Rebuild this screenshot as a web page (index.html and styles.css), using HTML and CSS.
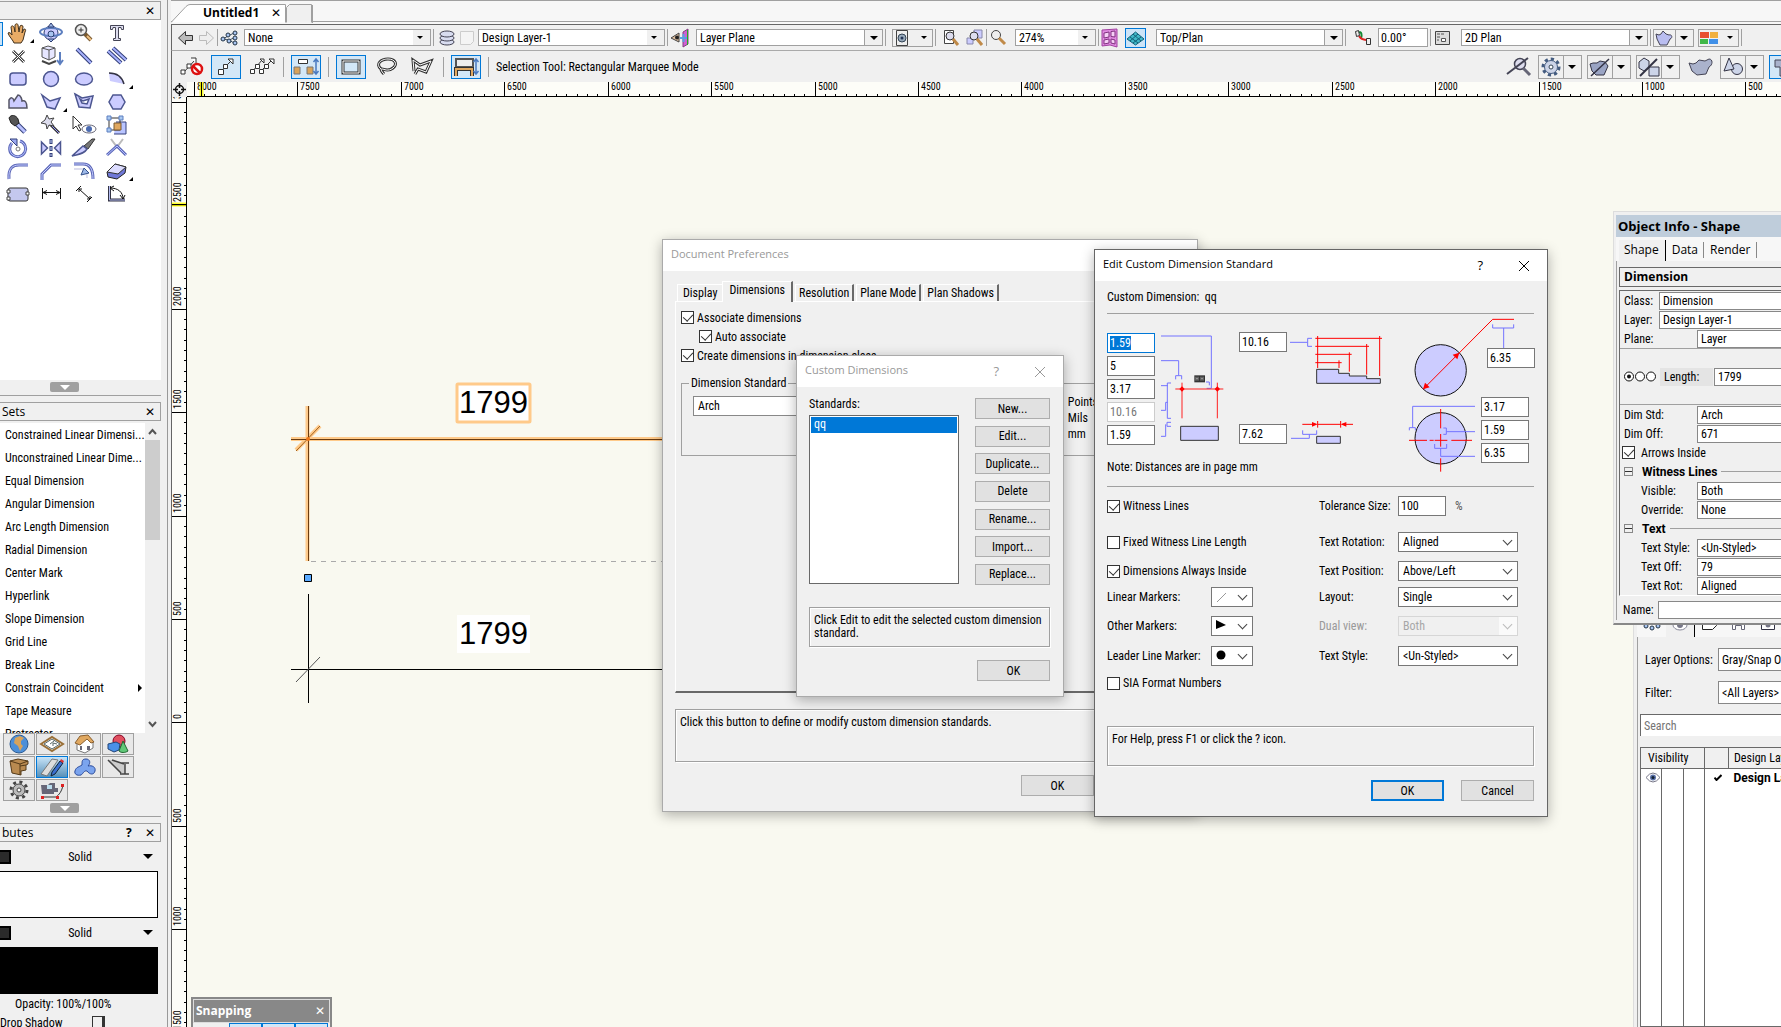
FILE: index.html
```html
<!DOCTYPE html>
<html lang="en">
<head>
  <meta charset="UTF-8">
  <meta name="viewport" content="width=device-width, initial-scale=1.0">
  <title>Untitled1</title>
  <link rel="stylesheet" href="styles.css">
</head>
<body>
  <div class="app">

    <!-- Left palettes -->
    <aside class="sidebar">
      <div class="pal-title"><span></span><button class="pal-close" aria-label="Close">✕</button></div>
      <div class="tools">
        <button class="tool more" aria-label="Pan"><svg width="24" height="22" viewBox="0 0 24 22"><path d="M7 19c-2-3-4-5-5-8 1-1 3 0 4 2L5 5c1-2 2-1 3 0l1 5V3c1-2 3-1 3 0l1 7 1-6c1-1 3-1 3 1l-1 6 2-4c2 0 2 1 1 3l-2 8-2 3H8z" fill="#e8ab66" stroke="#40301c"/></svg></button>
        <button class="tool" aria-label="Flyover"><svg width="26" height="22" viewBox="0 0 26 22"><circle cx="13" cy="11" r="7" fill="#ccf" stroke="#2d3c70"/><ellipse cx="13" cy="10" rx="11" ry="4" fill="none" stroke="#5d7fc0" stroke-width="2"/><path d="M13 1l3 4h-6zM13 20l3-3h-6z" fill="#9db8e8" stroke="#2d3c70"/><circle cx="13" cy="12" r="3" fill="#a8c4f0" stroke="#2d3c70"/></svg></button>
        <button class="tool" aria-label="Zoom"><svg width="24" height="22" viewBox="0 0 24 22"><circle cx="9" cy="8" r="5.500" fill="#eee" stroke="#555" stroke-width="1.500"/><path d="M6.500 8h5M9 5.500v5" stroke="#333"/><path d="M13 12l6 6" stroke="#7a5a30" stroke-width="4"/><path d="M15 14l4 4" stroke="#f0c080" stroke-width="2"/></svg></button>
        <button class="tool" aria-label="Text"><svg width="24" height="22" viewBox="0 0 24 22"><path d="M5.500 3.500h13v4h-2l-.5-2h-2.500v11h2v2h-7v-2h2v-11H8l-.5 2h-2z" fill="#dde" stroke="#445"/></svg></button>

        <button class="tool" aria-label="Locus"><svg width="24" height="22" viewBox="0 0 24 22"><path d="M7 6l11 11M18 6L7 17" stroke="#444" stroke-width="3"/><path d="M7 6l11 11M18 6L7 17" stroke="#fff"/></svg></button>
        <button class="tool" aria-label="Extrude"><svg width="26" height="22" viewBox="0 0 26 22"><path d="M4 3l6-2 7 2v9l-6 3-7-3z" fill="#e6e6ff" stroke="#555"/><path d="M4 3l7 2 6-2M11 5v10" stroke="#555" fill="none"/><path d="M4 16l7 3 7-3" fill="none" stroke="#444" stroke-width="2"/><path d="M22 7v11M19 15l3 4 3-4" stroke="#5d7fc0" stroke-width="2" fill="none"/></svg></button>
        <button class="tool" aria-label="Line"><svg width="24" height="22" viewBox="0 0 24 22"><path d="M5 4l14 14" stroke="#34407a" stroke-width="4"/><path d="M5 4l14 14" stroke="#a9b4ff" stroke-width="2"/></svg></button>
        <button class="tool" aria-label="Double line"><svg width="24" height="22" viewBox="0 0 24 22"><path d="M3 6l13 12M8 3l13 12" stroke="#34407a" stroke-width="4"/><path d="M3 6l13 12M8 3l13 12" stroke="#a9b4ff" stroke-width="2"/></svg></button>

        <button class="tool" aria-label="Rounded rectangle"><svg width="24" height="22" viewBox="0 0 24 22"><rect x="4" y="5" width="16" height="12" rx="3" class="shape"/></svg></button>
        <button class="tool" aria-label="Circle"><svg width="24" height="22" viewBox="0 0 24 22"><circle cx="12" cy="11" r="7.500" class="shape"/></svg></button>
        <button class="tool" aria-label="Oval"><svg width="24" height="22" viewBox="0 0 24 22"><ellipse cx="12" cy="11" rx="8.500" ry="6" class="shape"/></svg></button>
        <button class="tool more" aria-label="Arc"><svg width="24" height="22" viewBox="0 0 24 22"><path d="M4 5c8 0 14 4 15 11L5 13z" fill="#ccf"/><path d="M4 5c8 0 13 4 15 11" fill="none" stroke="#334" stroke-width="1.500"/></svg></button>

        <button class="tool" aria-label="Freehand"><svg width="24" height="22" viewBox="0 0 24 22"><path d="M3 17V9c2-3 4-3 5 1l4-6c3 0 4 5 4 6 3-1 5 1 5 7z" fill="#ccf" stroke="#556" stroke-width="1.500"/></svg></button>
        <button class="tool more" aria-label="Polyline"><svg width="24" height="22" viewBox="0 0 24 22"><path d="M3 4l8 6 10-3-5 11-8-2z" class="shape"/></svg></button>
        <button class="tool" aria-label="Polygon"><svg width="24" height="22" viewBox="0 0 24 22"><path d="M3 3l7 4 11-2-3 12-11-1zM8 8l2 4 5 1 2-5-6 2z" class="shape" fill-rule="evenodd"/></svg></button>
        <button class="tool" aria-label="Regular polygon"><svg width="24" height="22" viewBox="0 0 24 22"><path d="M8 4h8l4 7-4 7H8l-4-7z" class="shape"/></svg></button>

        <button class="tool" aria-label="Eyedropper"><svg width="24" height="22" viewBox="0 0 24 22"><path d="M10 9l9 9" stroke="#34407a" stroke-width="5"/><path d="M11 10l8 8" stroke="#b9c0ff" stroke-width="3"/><path d="M3 4c2-4 7-3 9 1l1 4-4 3-4-3z" fill="#555" stroke="#222"/></svg></button>
        <button class="tool" aria-label="Wand"><svg width="24" height="22" viewBox="0 0 24 22"><path d="M11 10l9 9" stroke="#333" stroke-width="3"/><path d="M12 11l8 8" stroke="#99f"/><path d="M8 1l2 4 5-1-3 4 3 4-5-1-2 4-1-5-5-1 4-3z" fill="#dde" stroke="#444"/></svg></button>
        <button class="tool" aria-label="Visibility"><svg width="26" height="22" viewBox="0 0 26 22"><path d="M2 2v13l3-3 3 5 2-1-3-5h4z" fill="#fff" stroke="#333"/><ellipse cx="18" cy="15" rx="7" ry="4" fill="#fff" stroke="#667"/><circle cx="18" cy="15" r="3" fill="#4a6ab0"/></svg></button>
        <button class="tool" aria-label="Select similar"><svg width="24" height="22" viewBox="0 0 24 22"><path d="M11 8h10v12H9" fill="#b9c4ff" stroke="#34407a"/><path d="M4 4h11v12H4z" fill="none" stroke="#333"/><path d="M9 9h7v7H9z" fill="#e0a860" stroke="#7a5a30"/><path d="M2 2h4v4H2zM14 2h4v4h-4zM2 14h4v4H2z" fill="#a8c8f0" stroke="#5d7fc0"/></svg></button>

        <button class="tool" aria-label="Rotate"><svg width="24" height="22" viewBox="0 0 24 22"><path d="M14 4a8 8 0 1 1-8 2" fill="none" stroke="#5d68b8" stroke-width="3"/><path d="M14 4a8 8 0 1 1-8 2" fill="none" stroke="#b4c0ff"/><path d="M4 2h7v7z" fill="#99a8f0" stroke="#34407a"/><circle cx="12" cy="12" r="2" fill="none" stroke="#777"/></svg></button>
        <button class="tool" aria-label="Mirror"><svg width="24" height="22" viewBox="0 0 24 22"><path d="M2.500 5v12l6-6zM21.500 5v12l-6-6z" class="shape"/><path d="M12 2v18" stroke="#34407a" stroke-width="3" stroke-dasharray="5 2"/><path d="M12 3v16" stroke="#c4d4ff" stroke-dasharray="3 4"/></svg></button>
        <button class="tool" aria-label="Split"><svg width="26" height="22" viewBox="0 0 26 22"><path d="M13 9l8-7h3l-7 10z" fill="#777" stroke="#333"/><path d="M1 19l11-10 4 3c-3 5-8 5-15 7z" class="shape"/></svg></button>
        <button class="tool" aria-label="Trim"><svg width="24" height="22" viewBox="0 0 24 22"><path d="M6 2l6 8 6-8" fill="none" stroke="#bbb" stroke-width="2"/><path d="M2 18l10-9 9 9" fill="none" stroke="#5d68b8" stroke-width="3"/><path d="M2 18l10-9 9 9" fill="none" stroke="#b4c0ff"/></svg></button>

        <button class="tool" aria-label="Fillet"><svg width="24" height="22" viewBox="0 0 24 22"><path d="M3 19c-1-11 4-14 10-14h9" class="tube"/><path d="M3 19c-1-11 4-14 10-14h9" class="tube-in"/></svg></button>
        <button class="tool" aria-label="Chamfer"><svg width="24" height="22" viewBox="0 0 24 22"><path d="M3 20v-6l9-9h10" class="tube"/><path d="M3 20v-6l9-9h10" class="tube-in"/></svg></button>
        <button class="tool" aria-label="Offset"><svg width="24" height="22" viewBox="0 0 24 22"><path d="M2 4h9c7 0 10 5 10 15" class="tube"/><path d="M2 4h9c7 0 10 5 10 15" class="tube-in"/><path d="M2 9h8c4 0 5 4 5 9" stroke="#dde" stroke-width="2" fill="none"/><path d="M9 15l3-7 5 5z" fill="#9db8e8" stroke="#34508a"/></svg></button>
        <button class="tool more" aria-label="Eraser"><svg width="24" height="22" viewBox="0 0 24 22"><path d="M2 12l8-8 11 3-1 6-8 6-9-2z" fill="#6f78d8" stroke="#222"/><path d="M2 12l8-8 11 3-8 7z" fill="#dcdcff" stroke="#333"/></svg></button>

        <button class="tool" aria-label="Clip cube"><svg width="26" height="22" viewBox="0 0 26 22"><rect x="3" y="5" width="20" height="13" rx="2" fill="#c4c8ee" stroke="#333"/><path d="M2 7h3v3H2zM21 9h3v3h-3zM2 14h3v3H2z" fill="#fff" stroke="#444"/></svg></button>
        <button class="tool" aria-label="Constrained linear dimension"><svg width="24" height="22" viewBox="0 0 24 22"><path d="M3.500 5v11M21.500 5v11M4 9.500h17M8 7.500l-4 2 4 2M17 7.500l4 2-4 2" fill="none" stroke="#111"/></svg></button>
        <button class="tool" aria-label="Unconstrained linear dimension"><svg width="24" height="22" viewBox="0 0 24 22"><path d="M4 8l5-5M15 19l5-5M7 6l11 10M7 9V6h3M18 13v3h-3" fill="none" stroke="#111"/></svg></button>
        <button class="tool" aria-label="Angular dimension"><svg width="24" height="22" viewBox="0 0 24 22"><path d="M4.500 3v14H20" fill="none" stroke="#334" stroke-width="3"/><path d="M4.500 3v14H20" fill="none" stroke="#b4bcf0"/><path d="M5 5c8 0 13 4 13 11M9 3L5 5l4 3M15 12l3 4 2-4" fill="none" stroke="#111"/></svg></button>
      </div>
      <div class="collapse"><button aria-label="Collapse tools"></button></div>

      <div class="pal-title gap-top"><span>Sets</span><button class="pal-close" aria-label="Close">✕</button></div>
      <div class="sets">
        <ul class="set-list">
          <li>Constrained Linear Dimensi...</li>
          <li>Unconstrained Linear Dime...</li>
          <li>Equal Dimension</li>
          <li>Angular Dimension</li>
          <li>Arc Length Dimension</li>
          <li>Radial Dimension</li>
          <li>Center Mark</li>
          <li>Hyperlink</li>
          <li>Slope Dimension</li>
          <li>Grid Line</li>
          <li>Break Line</li>
          <li class="has-sub">Constrain Coincident</li>
          <li>Tape Measure</li>
          <li>Protractor</li>
        </ul>
        <div class="scrollbar">
          <svg width="15" height="17" viewBox="0 0 15 17"><path d="M4 11l3.500-4 3.500 4" fill="none" stroke="#555" stroke-width="2"/></svg>
          <div class="thumb"></div>
          <svg width="15" height="17" viewBox="0 0 15 17"><path d="M4 6l3.500 4L11 6" fill="none" stroke="#555" stroke-width="2"/></svg>
        </div>
      </div>
      <div class="toolsets">
        <button aria-label="Site"><svg width="24" height="20" viewBox="0 0 24 20"><circle cx="12" cy="10" r="9" fill="#4d8fd8" stroke="#2b5a92"/><path d="M8 4l5-2 4 2-3 3v3l2 2-3 5-2-5-4-3z" fill="#d9a35a"/></svg></button>
        <button aria-label="Building shell"><svg width="26" height="20" viewBox="0 0 26 20"><path d="M2 10l11-7 11 7-11 7z" fill="#fff" stroke="#9a7038" stroke-width="2"/><path d="M5 10l8-5 8 5-8 5zM11 10l4-3M14 12V9l4 1" stroke="#566" fill="none"/></svg></button>
        <button aria-label="Home"><svg width="24" height="20" viewBox="0 0 24 20"><path d="M4 9v7l8 3 8-5V7l-6-5z" fill="#fff" stroke="#777"/><path d="M2 9l5-7 8-1 6 7-3 1-4-4-7 6z" fill="#e0a860" stroke="#8a6030"/><path d="M7 12h2v4H7zM14 12h3v4h-3z" fill="#667"/></svg></button>
        <button aria-label="3D modeling"><svg width="26" height="20" viewBox="0 0 26 20"><circle cx="14" cy="7" r="6" fill="#e05060" stroke="#802"/><path d="M3 10l8-2 4 2-1 6-5 2-6-3z" fill="#4a90e8" stroke="#247"/><path d="M18 7l5 10c-3 2-7 2-9 0z" fill="#60c878" stroke="#263"/></svg></button>
        <button aria-label="Furniture"><svg width="24" height="20" viewBox="0 0 24 20"><path d="M3 4l8-2 10 2v3l-2 1v5l-5 1v4l-9-2z" fill="#b98a50" stroke="#543a18"/><path d="M3 4l10 3 8-3M13 7v11M13 9l6-1" fill="none" stroke="#543a18"/></svg></button>
        <button class="active" aria-label="Dims and notes"><svg width="26" height="20" viewBox="0 0 26 20"><path d="M2 17L13 2l6 1L8 19z" fill="#ddd" stroke="#777"/><path d="M13 15l8-11 3 2-8 11-4 2z" fill="#3b6fd0" stroke="#123"/><path d="M21 4l1-2 3 2-1 2z" fill="#d33"/></svg></button>
        <button aria-label="Piping"><svg width="26" height="20" viewBox="0 0 26 20"><path d="M3 14c1-4 4-4 7-6 0-4 0-6 4-6s5 4 2 7c4-1 8 1 7 5s-5 4-8 0c-3-1-4 3-6 4-4 1-7-1-6-4z" fill="#7ba4ee" stroke="#2a4a9a"/></svg></button>
        <button aria-label="Detailing"><svg width="26" height="20" viewBox="0 0 26 20"><path d="M3 3h5l12 5v9l-4-1z" fill="#ccc"/><path d="M3 3l13 13M7 3l12 4M16 6h8M20 7v10M15 17h9" fill="none" stroke="#444" stroke-width="1.500"/></svg></button>
        <button aria-label="Machine design"><svg width="24" height="20" viewBox="0 0 24 20"><circle cx="12" cy="10" r="6" fill="#bbb" stroke="#444"/><circle cx="12" cy="10" r="8" fill="none" stroke="#444" stroke-width="3" stroke-dasharray="3 3.300"/><circle cx="12" cy="10" r="2" fill="#fff" stroke="#444"/></svg></button>
        <button aria-label="Camera"><svg width="26" height="20" viewBox="0 0 26 20"><path d="M2 5h7l2-2h5v5h3v4h-4v2H3z" fill="#667"/><path d="M8 5h5v4H8z" fill="#bde"/><path d="M4 17h13c3-2 6-6 7-12" fill="none" stroke="#333"/><path d="M2 16h3v3H2zM17 16h3v3h-3zM22 4h3v3h-3z" fill="#d22"/></svg></button>
      </div>
      <div class="collapse"><button aria-label="Collapse tool sets"></button></div>

      <div class="pal-title gap-top"><span>butes</span><b class="pal-help">?</b><button class="pal-close" aria-label="Close">✕</button></div>
      <div class="attr-row"><i class="chip"></i><span>Solid</span><i class="tri"></i></div>
      <div class="attr-box fill"></div>
      <div class="attr-row"><i class="chip"></i><span>Solid</span><i class="tri"></i></div>
      <div class="attr-box pen"></div>
      <div class="opacity">Opacity: 100%/100%</div>
      <div class="shadow-row"><label for="drop">Drop Shadow</label><button id="drop" class="drop-btn" aria-label="Drop shadow"></button></div>
    </aside>

    <main class="main">
      <div class="tabstrip">
        <svg class="tab-shape" width="145" height="24" viewBox="0 0 145 24"><path d="M0 21.500L15 5.500q2-2 4-2h95.500v18" fill="#fff" stroke="#a0a0a0"/><path d="M115.500 21.500v-15l3-3h22v18" fill="#f0f0f0" stroke="#a0a0a0"/><path d="M141.500 4v18" stroke="#a0a0a0"/></svg>
        <strong>Untitled1</strong>
        <button class="pal-close" aria-label="Close document">✕</button>
      </div>

      <div class="toolbar view-bar">
        <svg width="18" height="16" viewBox="0 0 18 16"><path d="M1.500 8l7-6.500v4h7v5h-7v4z" fill="#bbb" stroke="#333"/></svg>
        <svg width="18" height="16" viewBox="0 0 18 16"><path d="M16.500 8l-7-6.500v4h-7v5h7v4z" fill="#eee" stroke="#bbb"/></svg>
        <i class="sep"></i>
        <svg width="18" height="16" viewBox="0 0 18 16"><path d="M3 9l5-3 6-3M3 9l6 1 5-2M9 10l5 3" stroke="#456" fill="none"/><g fill="#a8c4f0" stroke="#234" ><circle cx="3" cy="9" r="2"/><circle cx="8" cy="5" r="2"/><circle cx="15" cy="3" r="2"/><circle cx="9" cy="11" r="2"/><circle cx="15" cy="8" r="2"/><circle cx="15" cy="13" r="2"/></g></svg>
        <span class="combo wide flat s4"><select aria-label="Class"><option>None</option></select></span>
        <i class="sep"></i>
        <svg class="s2" width="18" height="16" viewBox="0 0 18 16"><g fill="#d8dcf0" stroke="#445"><ellipse cx="9" cy="12" rx="7" ry="3"/><ellipse cx="9" cy="8" rx="7" ry="3"/><ellipse cx="9" cy="4" rx="7" ry="3"/></g></svg>
        <svg width="18" height="16" viewBox="0 0 18 16"><path d="M2.500 1.500h13v10l-3 3h-10z" fill="#f4f4f4" stroke="#ccc"/></svg>
        <span class="combo wide flat"><select aria-label="Layer"><option>Design Layer-1</option></select></span>
        <i class="sep"></i>
        <svg width="20" height="20" viewBox="0 0 20 20"><path d="M1 10l8-5v9z" fill="#e0c0a0" stroke="#444"/><circle cx="7" cy="9.500" r="2" fill="#222"/><path d="M13 4l5-3v15l-5 3z" fill="#d060d0" stroke="#804080"/><path d="M17.500 2v15" stroke="#2a2"/><path d="M10 10h7M13.500 6v8" stroke="#5d9fe0" stroke-width="2"/></svg>
        <span class="combo wide s4"><select aria-label="Plane"><option>Layer Plane</option></select></span>
        <i class="sep"></i>
        <button class="drop-combo flat s4" aria-label="Saved views"><svg width="18" height="16" viewBox="0 0 18 16"><path d="M3.500.5h11v15h-11z" fill="#eee" stroke="#444"/><circle cx="9" cy="8" r="4" fill="#9ab" stroke="#345"/><circle cx="9" cy="8" r="1.500" fill="#235"/></svg></button>
        <i class="sep"></i>
        <svg class="s4" width="18" height="17" viewBox="0 0 18 17"><path d="M2.500 1.500h9v13h-9z" fill="#fff" stroke="#444"/><circle cx="8" cy="7" r="4" fill="#dde" stroke="#333"/><path d="M11 10l5 6" stroke="#c08a48" stroke-width="3"/></svg>
        <svg class="s4" width="18" height="17" viewBox="0 0 18 17"><path d="M8 1h8v8H8zM1 9h6v6H1z" fill="#ccf" stroke="#88a"/><circle cx="8" cy="7" r="4" fill="#dde" stroke="#333"/><path d="M11 10l5 6" stroke="#c08a48" stroke-width="3"/></svg>
        <i class="sep"></i>
        <svg width="18" height="17" viewBox="0 0 18 17"><circle cx="7" cy="6" r="4.500" fill="#eee" stroke="#444"/><path d="M10 9l6 6" stroke="#c08a48" stroke-width="3"/></svg>
        <span class="combo zoom flat s6"><select aria-label="Zoom"><option>274%</option></select></span>
        <i class="sep"></i>
        <svg width="18" height="20" viewBox="0 0 18 20"><path d="M1 2l15-1v18l-7-2-8 1z" fill="#e08ae0" stroke="#a040a0"/><path d="M3 5l5-1v5L3 10zM10 3.500l4-.5v6l-4-.5zM3 12l5-1v4l-5 1zM10 11l4 1v4l-4-1z" fill="#f6d0f6" stroke="#803080"/></svg>
        <span class="pressed s4"><svg width="21" height="20" viewBox="0 0 21 20"><path d="M2 11l8.500-7 8.500 7-8.500 6z" fill="#40b8c8" stroke="#106078"/><path d="M5 9l8 6M8 6l8 7M16 9l-8 6M13 6l-8 7" stroke="#106078"/></svg></span>
        <span class="combo wide s8"><select aria-label="View"><option>Top/Plan</option></select></span>
        <i class="sep"></i>
        <svg class="s6" width="18" height="18" viewBox="0 0 18 18"><path d="M4 4c4-3 4 3 3 6" fill="none" stroke="#183" stroke-width="2"/><path d="M5 7c3 5 6 3 8 4" fill="none" stroke="#d22" stroke-width="2"/><path d="M1.500 2.500l3-1 1 5-3 1zM12.500 9.500h4v6h-4z" fill="#eee" stroke="#333"/></svg>
        <input class="field angle s4" aria-label="Angle" value="0.00°">
        <i class="sep"></i>
        <svg width="18" height="16" viewBox="0 0 18 16"><path d="M2.500 1.500h14v13h-14z" fill="#ddd" stroke="#444"/><path d="M4 4h3M8 4h3M4 7h3M4 10h2M8.500 8.500h4v3h-4z" stroke="#555" fill="#fff"/></svg>
        <span class="combo wide s8"><select aria-label="Projection"><option>2D Plan</option></select></span>
        <i class="sep"></i>
        <button class="drop-combo split" aria-label="Render mode"><svg width="20" height="16" viewBox="0 0 20 16"><path d="M5 5L2 4l1 5 3 6h7l3-6c3-1 2-5-1-4l-3-1-3-3-2 3z" fill="#b9bdf0" stroke="#445"/></svg></button>
        <button class="drop-combo flat s2" aria-label="Colors"><svg width="20" height="16" viewBox="0 0 20 16"><path d="M1 2h9v6H1z" fill="#e85030"/><path d="M11 2h8v6h-8z" fill="#f0b040"/><path d="M1 9h8v5H1z" fill="#40b848"/><path d="M10 9h9v5h-9z" fill="#4090e8"/></svg></button>
        <i class="sep"></i>
      </div>

      <div class="toolbar mode-bar">
        <svg width="24" height="22" viewBox="0 0 24 22"><path d="M3 17L15 4" stroke="#333"/><path d="M1 14h4v4H1zM7 8h4v4H7zM11 2h5v5" fill="#fff" stroke="#333"/><circle cx="17" cy="13" r="5" fill="#fff" stroke="#d11" stroke-width="2.500"/><path d="M13 10l7 7" stroke="#d11" stroke-width="2.500"/></svg>
        <button class="mode on" aria-label="Single object"><svg width="24" height="22" viewBox="0 0 24 22"><path d="M6 16L18 4" stroke="#333"/><path d="M4.500 13.500h5v5h-5zM9.500 8.500h4v4h-4zM14 3h5v5z" fill="#fff" stroke="#333"/></svg></button>
        <svg width="28" height="22" viewBox="0 0 28 22"><path d="M4 16L14 4M12 16L24 4" stroke="#333"/><path d="M2.500 13.500h4v4h-4zM7.500 8.500h4v4h-4zM12 3h4v4zM11.500 13.500h4v4h-4zM16.500 8.500h4v4h-4zM21 3h5v5z" fill="#fff" stroke="#333"/></svg>
        <i class="sep"></i>
        <button class="mode on" aria-label="Enable scaling"><svg width="28" height="22" viewBox="0 0 28 22"><path d="M6.500 3.500h9v4h-9z" fill="#fff" stroke="#333"/><path d="M2 11h6v7H2zM15 11h6v7h-6z" fill="#d9a35a" stroke="#777"/><path d="M24 3v14M21.500 6L24 3l2.500 3M21.500 15l2.500 3 2.500-3" fill="none" stroke="#4a7ac0" stroke-width="1.500"/></svg></button>
        <i class="sep"></i>
        <button class="mode on" aria-label="Rectangular marquee"><svg width="24" height="22" viewBox="0 0 24 22"><path d="M4 5h16v12H4z" fill="none" stroke="#333" stroke-width="3"/><path d="M4 5h16v12H4z" fill="none" stroke="#fff"/></svg></button>
        <svg width="28" height="22" viewBox="0 0 28 22"><path d="M8 13c-6-5 0-10 7-10s10 5 5 9-9 1-11 1 0 3 2 5" fill="none" stroke="#333" stroke-width="3"/><path d="M8 13c-6-5 0-10 7-10s10 5 5 9-9 1-11 1 0 3 2 5" fill="none" stroke="#fff"/></svg>
        <svg width="28" height="22" viewBox="0 0 28 22"><path d="M6 15L5 4l7 5 11-4-5 11-8-3-3 5" fill="none" stroke="#333" stroke-width="3"/><path d="M6 15L5 4l7 5 11-4-5 11-8-3-3 5" fill="none" stroke="#fff"/></svg>
        <i class="sep"></i>
        <button class="mode on" aria-label="Wall insertion"><svg width="28" height="22" viewBox="0 0 28 22"><path d="M4 3h17v8H4z" fill="#eee" stroke="#555" stroke-width="2"/><path d="M4 20v-7h16v7" fill="none" stroke="#333" stroke-width="4"/><path d="M4 20v-7h16v7" fill="none" stroke="#e0a860" stroke-width="2"/><path d="M24 3v14M21.500 6L24 3l2.500 3M21.500 15l2.500 3 2.500-3" fill="none" stroke="#4a7ac0" stroke-width="1.500"/></svg></button>
        <i class="sep"></i>
        <span class="mode-text">Selection Tool: Rectangular Marquee Mode</span>

        <div class="mode-right">
          <svg width="28" height="22" viewBox="0 0 28 22"><circle cx="15" cy="8" r="5.500" fill="#dde" stroke="#445" stroke-width="1.500"/><path d="M2 18L23 2" stroke="#445" stroke-width="2"/><path d="M18 12l7 7" stroke="#667" stroke-width="3"/></svg>
          <button class="drop-combo big" aria-label="Settings"><svg width="24" height="22" viewBox="0 0 24 22"><circle cx="12" cy="11" r="8" fill="none" stroke="#445c80" stroke-width="3" stroke-dasharray="3.200 3"/><circle cx="12" cy="11" r="6.500" fill="#ccd4e8" stroke="#445c80"/><circle cx="12" cy="11" r="2" fill="#fff" stroke="#345"/></svg></button>
          <button class="drop-combo big" aria-label="Working plane"><svg width="24" height="22" viewBox="0 0 24 22"><path d="M5 7L2 8l2 7 4 4h8l4-9-3-4-5-1-3 2z" fill="#9aa4c4" stroke="#334"/><path d="M3 20L21 3" stroke="#334" stroke-width="1.500"/></svg></button>
          <button class="drop-combo big" aria-label="Objects"><svg width="24" height="22" viewBox="0 0 24 22"><path d="M2 6l5-4 5 3v7l-5 3-5-3zM12 11h10v9H12z" fill="#ccd4e8" stroke="#334"/><path d="M3 20L20 3" stroke="#334" stroke-width="2"/></svg></button>
          <svg width="30" height="22" viewBox="0 0 30 22"><path d="M8 8L4 7l3 8 5 4 9-1 3-7c4-2 4-8 0-8l-4 2-6-1-3 3z" fill="#aab2cc" stroke="#445"/></svg>
          <button class="drop-combo big" aria-label="Shapes"><svg width="24" height="22" viewBox="0 0 24 22"><circle cx="16" cy="13" r="5.500" fill="#ccd4e8" stroke="#334"/><path d="M8 2l5 11-10 2z" fill="#ccd4e8" stroke="#334"/></svg></button>
          <button class="mode on" aria-label="Panels"><svg width="24" height="22" viewBox="0 0 24 22"><path d="M3 4h18v7h-8v9H8v-9H3z" fill="#a9b2cc" stroke="#445"/></svg></button>
        </div>
      </div>

      <div class="drawing">
        <div class="origin"><svg width="15" height="15" viewBox="0 0 15 15"><circle cx="7.500" cy="7.500" r="4" fill="none" stroke="#111" stroke-width="1.500"/><path d="M7.500 1v5M7.500 9v5M1 7.500h5M9 7.500h5" stroke="#111" stroke-width="1.500"/></svg></div>
        <svg class="ruler" id="ruler-x"></svg>
        <svg class="ruler" id="ruler-y"></svg>
        <svg class="canvas">
          <!-- upper dimension, selected -->
          <g stroke="#ffca8a" stroke-width="4">
            <path d="M120.500 309v155M104 342h380M109 353l24-24"/>
          </g>
          <path d="M121.500 309v155M104 342.500h380" stroke="#6b3c10"/>
          <path d="M109 354l24-25" stroke="#a0601c"/>
          <circle cx="121" cy="342" r="2" fill="#f07818"/>
          <rect x="270" y="287" width="73" height="38" rx="1" fill="#fff" stroke="#ffca8a" stroke-width="3"/>
          <text x="272" y="316">1799</text>
          <path d="M124 464.500h360" stroke="#aaa" stroke-dasharray="5 5"/>
          <path d="M117.500 477.500h7v7h-7z" fill="#5aaaff" stroke="#000"/>
          <!-- lower dimension -->
          <path d="M121.500 497v109M104 572.500h380" stroke="#000"/>
          <path d="M109 585l24-25" stroke="#555"/>
          <path d="M270 518h73v38h-73z" fill="#fff"/>
          <text x="272" y="547">1799</text>
        </svg>
      </div>
    </main>
  </div>

  <!-- Snapping palette -->
  <section class="snapping">
    <header>Snapping<button class="pal-close" aria-label="Close">✕</button></header>
    <div class="snap-row"><i></i><i></i><i></i></div>
  </section>

  <!-- Navigation palette -->
  <section class="navigation">
    <div class="nav-tabs">
      <span><svg width="18" height="16" viewBox="0 0 18 16"><g fill="#a8c4f0" stroke="#234"><circle cx="3" cy="10" r="2"/><circle cx="9" cy="12" r="2"/><circle cx="15" cy="10" r="2"/></g></svg></span>
      <span class="on"><svg width="18" height="16" viewBox="0 0 18 16"><ellipse cx="9" cy="9" rx="7" ry="5" fill="#fff" stroke="#889"/><circle cx="9" cy="9" r="3" fill="#778"/></svg></span>
      <span><svg width="18" height="16" viewBox="0 0 18 16"><path d="M1.500 3.500h14v6l-4 4h-10z" fill="#fff" stroke="#222"/></svg></span>
      <span><svg width="18" height="16" viewBox="0 0 18 16"><path d="M2.500 3.500h12v10h-3v-4h-6v4h-3z" fill="#fff" stroke="#667"/></svg></span>
      <span><svg width="18" height="16" viewBox="0 0 18 16"><path d="M2.500 2.500h13v11h-13z" fill="#fff" stroke="#334"/><circle cx="9" cy="9" r="2.500" fill="#778"/></svg></span>
    </div>
    <div class="nav-body">
      <div class="nav-row"><label for="lopt">Layer Options:</label><select id="lopt" class="plain"><option>Gray/Snap Others</option></select></div>
      <div class="nav-row"><label for="lfil">Filter:</label><select id="lfil" class="plain"><option>&lt;All Layers&gt;</option></select></div>
      <input class="search" placeholder="Search" aria-label="Search">
      <table class="layers">
        <thead><tr><th colspan="3">Visibility</th><th></th><th>Design Layer Name</th></tr></thead>
        <tbody>
          <tr class="layer"><td><svg width="14" height="11" viewBox="0 0 14 11"><path d="M0 5.500q7-9 14 0q-7 9-14 0z" fill="#fff" stroke="#778"/><circle cx="7" cy="5.500" r="3" fill="#5a70a8"/><circle cx="7" cy="5.500" r="1.500" fill="#123"/></svg></td><td></td><td></td><td class="tick"><svg width="8" height="7" viewBox="0 0 8 7"><path d="M.5 3.500l2 2.500 5-5" fill="none" stroke="#000" stroke-width="2"/></svg></td><td><b>Design Layer-1</b></td></tr>
          <tr class="rest"><td></td><td></td><td></td><td></td><td></td></tr>
        </tbody>
      </table>
    </div>
  </section>

  <!-- Object info palette -->
  <section class="objinfo">
    <header>Object Info - Shape</header>
    <div class="oi-tabs"><button class="on">Shape</button><button>Data</button><button>Render</button></div>
    <div class="oi-body">
      <div class="oi-type">Dimension</div>
      <div class="oi-form">
        <div class="oi-row"><label for="cls">Class:</label><select id="cls" class="plain"><option>Dimension</option></select></div>
        <div class="oi-row"><label for="lay">Layer:</label><select id="lay" class="plain"><option>Design Layer-1</option></select></div>
        <div class="oi-row mid"><label for="pln">Plane:</label><select id="pln" class="plain"><option>Layer</option></select></div>
        <div class="oi-length">
          <svg width="32" height="11" viewBox="0 0 32 11"><g fill="#fff" stroke="#111"><circle cx="5" cy="5.500" r="4.500"/><circle cx="16" cy="5.500" r="4.500"/><circle cx="27" cy="5.500" r="4.500"/></g><circle cx="5" cy="5.500" r="2" fill="#111"/></svg>
          <label for="len">Length:</label><input id="len" class="plain" value="1799">
        </div>
        <div class="oi-row mid"><label for="dstd">Dim Std:</label><select id="dstd" class="plain"><option>Arch</option></select></div>
        <div class="oi-row mid"><label for="doff">Dim Off:</label><input id="doff" class="plain" value="671"></div>
        <div class="oi-row check"><input type="checkbox" id="arr" checked><label for="arr">Arrows Inside</label></div>
        <div class="oi-row group"><i class="minus"></i><b>Witness Lines</b></div>
        <div class="oi-row mid in"><label for="vis">Visible:</label><select id="vis" class="plain"><option>Both</option></select></div>
        <div class="oi-row mid in"><label for="ovr">Override:</label><select id="ovr" class="plain"><option>None</option></select></div>
        <div class="oi-row group"><i class="minus"></i><b>Text</b></div>
        <div class="oi-row mid in"><label for="tst">Text Style:</label><select id="tst" class="plain"><option>&lt;Un-Styled&gt;</option></select></div>
        <div class="oi-row mid in"><label for="tof">Text Off:</label><input id="tof" class="plain" value="79"></div>
        <div class="oi-row mid in"><label for="tro">Text Rot:</label><select id="tro" class="plain"><option>Aligned</option></select></div>
      </div>
      <div class="oi-name"><label for="nm">Name:</label><input id="nm" class="plain"></div>
    </div>
  </section>

  <!-- Document Preferences -->
  <section class="dialog prefs">
    <header>Document Preferences</header>
    <div class="prefs-body">
      <div class="tabs">
        <button>Display</button><button class="on">Dimensions</button><button>Resolution</button><button>Plane Mode</button><button>Plan Shadows</button>
      </div>
      <div class="tab-page">
        <div class="check-row"><input type="checkbox" id="assoc" checked><label for="assoc">Associate dimensions</label></div>
        <div class="check-row indent"><input type="checkbox" id="auto" checked><label for="auto">Auto associate</label></div>
        <div class="check-row"><input type="checkbox" id="create" checked><label for="create">Create dimensions in dimension class</label></div>
        <fieldset>
          <legend>Dimension Standard</legend>
          <select class="box" aria-label="Dimension Standard"><option>Arch</option></select>
          <div class="units">
            <label><input type="radio" name="u">Points</label>
            <label><input type="radio" name="u">Mils</label>
            <label><input type="radio" name="u">mm</label>
          </div>
        </fieldset>
      </div>
      <div class="hint">Click this button to define or modify custom dimension standards.</div>
      <div class="prefs-foot"><button class="btn">OK</button></div>
    </div>
  </section>

  <!-- Custom Dimensions -->
  <section class="dialog custom">
    <header>Custom Dimensions<span class="win-btns"><button aria-label="Help">?</button><button aria-label="Close"><svg width="12" height="12" viewBox="0 0 12 12"><path d="M1 1l10 10M11 1L1 11" stroke="currentColor"/></svg></button></span></header>
    <div class="custom-body">
      <div class="custom-top">
        <div class="standards">
          <span>Standards:</span>
          <div class="list"><div class="item">qq</div></div>
        </div>
        <div class="std-btns">
          <button class="btn">New...</button>
          <button class="btn">Edit...</button>
          <button class="btn">Duplicate...</button>
          <button class="btn">Delete</button>
          <button class="btn">Rename...</button>
          <button class="btn">Import...</button>
          <button class="btn">Replace...</button>
        </div>
      </div>
      <div class="hint">Click Edit to edit the selected custom dimension standard.</div>
      <div class="custom-foot"><button class="btn">OK</button></div>
    </div>
  </section>

  <!-- Edit Custom Dimension Standard -->
  <section class="dialog edit">
    <header>Edit Custom Dimension Standard<span class="win-btns"><button aria-label="Help">?</button><button aria-label="Close"><svg width="12" height="12" viewBox="0 0 12 12"><path d="M1 1l10 10M11 1L1 11" stroke="currentColor"/></svg></button></span></header>
    <div class="edit-body">
      <div class="edit-name">Custom Dimension:&nbsp; qq</div>
      <div class="diagram">
        <div class="col c1">
          <input class="num sel" id="first" aria-label="Text offset" value="1.59">
          <input class="num" aria-label="Marker offset" value="5">
          <input class="num" aria-label="Witness extension" value="3.17">
          <input class="num" aria-label="Witness length" value="10.16" disabled>
          <input class="num" aria-label="Witness offset" value="1.59">
        </div>
        <svg width="84" height="142" viewBox="195 219 252 426">
          <g fill="none" stroke="#7373ff" stroke-width="3">
            <path d="M213 273h151v157h-14M348 411h10v10M213 347h53v44M257 403v-11h18v11M213 422h20M243 414h-11v106h11M213 496h14v-24h6M243 544h-12v-12h12M213 574h14v-36"/>
          </g>
          <path d="M276 413v107M382 413v107M256 432h144" fill="none" stroke="#ff2020" stroke-width="3"/>
          <path d="M268 432l8-8 8 8-8 8zM374 432l8-8 8 8-8 8z" fill="#f00"/>
          <path d="M313 391h32v21h-32z" fill="#333"/><path d="M318 395v12M318 401h6M324 395v12M333 395v12M333 401h6M339 395v12" stroke="#bbb" stroke-width="2"/>
          <path d="M272 544h113v42H272z" fill="#ccf" stroke="#333" stroke-width="3"/>
        </svg>
        <div class="col c2">
          <input class="num" aria-label="Baseline offset" value="10.16">
          <input class="num" aria-label="Arrow length" value="7.62">
        </div>
        <svg width="194" height="142" viewBox="591 219 582 426">
          <path d="M680 373h66v12h32v8h52v8h41v14H680z" fill="#ccf" stroke="#333" stroke-width="3"/>
          <path d="M680 574h71v21h-71z" fill="#ccf" stroke="#333" stroke-width="3"/>
          <circle cx="1052" cy="376" r="77" fill="#ccf" stroke="#111" stroke-width="3"/>
          <circle cx="1052" cy="580" r="77" fill="#ccf" stroke="#111" stroke-width="3"/>
          <g fill="none" stroke="#f00" stroke-width="3">
            <path d="M683 273v96M676 280h200M869 273v120M676 304h161M830 297v92M676 328h109M778 322v58M676 353h79M747 346v23"/>
            <path d="M637 538h40M757 538h32M683 538h69M683 528v20M752 528v20"/>
            <path d="M1000 432l208-209h64M957 586h54M1019 586h12M1034 586h38M1084 586h62M1052 492v58M1052 567v38M1052 640v40"/>
          </g>
          <path d="M683 538l-17-7v14zM752 538l17-7v14zM999 433l6-20 14 14zM1108 323l-6 20-14-14z" fill="#f00"/>
          <g fill="none" stroke="#7373ff" stroke-width="3">
            <path d="M600 292h52M666 280h-13v24h13M603 580h55v-12M638 556v12h42v-12"/>
            <path d="M1208 238v11h63v-11M1241 249v60M1155 484h-187v64M958 556v-8h18v8M1155 560h-86M1060 549h9v19h-9M1155 634h-103v-24M1034 597v13h36v-13"/>
          </g>
        </svg>
        <div class="col c3">
          <input class="num" aria-label="Shoulder length" value="6.35">
          <input class="num" aria-label="Center mark extension" value="3.17">
          <input class="num" aria-label="Center mark gap" value="1.59">
          <input class="num" aria-label="Center mark size" value="6.35">
        </div>
      </div>
      <div class="note">Note: Distances are in page mm</div>

      <div class="options">
        <div class="opt"><input type="checkbox" id="wl" checked><label for="wl">Witness Lines</label></div>
        <div class="opt"><label class="lab" for="tol">Tolerance Size:</label><input id="tol" class="num" value="100"><span class="pct">%</span></div>
        <div class="opt"><input type="checkbox" id="fw"><label for="fw">Fixed Witness Line Length</label></div>
        <div class="opt"><label class="lab" for="tr">Text Rotation:</label><span class="drop"><select id="tr"><option>Aligned</option></select></span></div>
        <div class="opt"><input type="checkbox" id="dai" checked><label for="dai">Dimensions Always Inside</label></div>
        <div class="opt"><label class="lab" for="tp">Text Position:</label><span class="drop"><select id="tp"><option>Above/Left</option></select></span></div>
        <div class="opt"><label class="mlab" for="m1">Linear Markers:</label><span class="drop small"><select id="m1"><option></option></select><svg width="14" height="14" viewBox="0 0 14 14"><path d="M3 12L12 3" stroke="#999"/></svg></span></div>
        <div class="opt"><label class="lab" for="ly">Layout:</label><span class="drop"><select id="ly"><option>Single</option></select></span></div>
        <div class="opt"><label class="mlab" for="m2">Other Markers:</label><span class="drop small"><select id="m2"><option></option></select><svg width="14" height="14" viewBox="0 0 14 14"><path d="M2 1l10 5L2 10z"/></svg></span></div>
        <div class="opt"><label class="lab off" for="dv">Dual view:</label><span class="drop off"><select id="dv" disabled><option>Both</option></select></span></div>
        <div class="opt"><label class="mlab" for="m3">Leader Line Marker:</label><span class="drop small"><select id="m3"><option></option></select><svg width="14" height="14" viewBox="0 0 14 14"><circle cx="7" cy="6" r="4.500"/></svg></span></div>
        <div class="opt"><label class="lab" for="ts">Text Style:</label><span class="drop"><select id="ts"><option>&lt;Un-Styled&gt;</option></select></span></div>
        <div class="opt"><input type="checkbox" id="sia"><label for="sia">SIA Format Numbers</label></div>
      </div>
      <div class="hint">For Help, press F1 or click the ? icon.</div>
      <div class="edit-foot"><button class="btn default">OK</button><button class="btn">Cancel</button></div>
    </div>
  </section>

  <script src="rulers.js"></script>
</body>
</html>
```

FILE: styles.css
```css
:root {
  --ui: "Roboto Condensed", "Liberation Sans", sans-serif;
  --title: "Open Sans", "Noto Sans", sans-serif;
  --face: #f0f0f0;
  --line: #a0a0a0;
  --dark: #696969;
  --blue: #0078d7;
}

* {
  box-sizing: border-box;
}

html, body {
  height: 100%;
  margin: 0;
}

body {
  position: relative;
  overflow: hidden;
  background: var(--face);
  font: 12px/14px var(--ui);
  color: #000;
}

button, input, select {
  margin: 0;
  padding: 0;
  border: 0;
  border-radius: 0;
  background: none;
  font: inherit;
  color: inherit;
  appearance: none;
}

svg {
  display: block;
  flex-shrink: 0;
}

.app {
  display: flex;
  height: 100%;
}

/* left palettes */
.sidebar {
  width: 168px;
  flex-shrink: 0;
  padding-right: 6px;
  border-right: 1px solid #999;
  overflow: hidden;
}

.pal-title {
  display: flex;
  align-items: center;
  height: 19px;
  margin-top: 1px;
  padding: 0 4px 0 2px;
  border: 1px solid var(--line);
  border-left: 0;
  font: 12px/16px var(--title);
}

.pal-title span {
  flex: 1;
}

.gap-top {
  margin-top: 6px;
}

.pal-close {
  width: 12px;
  font: bold 12px/14px "DejaVu Sans", sans-serif;
}

.pal-help {
  width: 18px;
}

.tools {
  position: relative;
  display: grid;
  grid-template-columns: repeat(4, 33px);
  grid-auto-rows: 23px;
  align-content: start;
  height: 360px;
  padding: 1px 0 0 1px;
  background: #fff;
}

.tools::before {
  content: "";
  position: absolute;
  left: 0;
  top: 2px;
  width: 2px;
  height: 22px;
  background: #cce4f7;
  border: 1px solid var(--blue);
  border-left: 0;
}

.tool {
  position: relative;
  display: flex;
  align-items: center;
  justify-content: center;
}

.more::after {
  content: "";
  position: absolute;
  right: 0;
  bottom: 1px;
  border-left: 4px solid transparent;
  border-bottom: 4px solid #000;
}

.shape {
  fill: #ccf;
  stroke: #4c5690;
  stroke-width: 1.5;
}

.tube {
  fill: none;
  stroke: #5d68b8;
  stroke-width: 3;
}

.tube-in {
  fill: none;
  stroke: #c4ccff;
}

.collapse {
  height: 16px;
  padding: 2px 0 0 50px;
  border-bottom: 1px solid var(--line);
}

.collapse button {
  display: flex;
  justify-content: center;
  align-items: center;
  width: 29px;
  height: 10px;
  border-radius: 2px;
  background: var(--line);
}

.collapse button::after {
  content: "";
  border: 5px solid transparent;
  border-top-color: #fff;
  border-bottom: 0;
}

.sets {
  display: flex;
  height: 310px;
  margin-top: 2px;
  background: #fff;
  overflow: hidden;
}

.set-list {
  flex: 1;
  margin: 0;
  padding: 0 0 0 5px;
  list-style: none;
  white-space: nowrap;
}

.set-list li {
  position: relative;
  height: 23px;
  line-height: 24px;
}

.has-sub::after {
  content: "";
  position: absolute;
  right: 3px;
  top: 8px;
  border: 4px solid transparent;
  border-left-color: #000;
  border-right: 0;
}

.scrollbar {
  width: 16px;
  display: flex;
  flex-direction: column;
  background: var(--face);
}

.scrollbar svg:last-child {
  margin-top: auto;
}

.thumb {
  width: 15px;
  height: 100px;
  background: #cdcdcd;
}

.toolsets {
  display: grid;
  grid-template-columns: repeat(4, 32px);
  grid-auto-rows: 22px;
  gap: 1px;
  padding-left: 3px;
}

.toolsets button {
  display: flex;
  align-items: center;
  justify-content: center;
  border: 1px solid var(--line);
  background: #e8e8e8;
}

.toolsets .active {
  border-color: var(--blue);
  background: linear-gradient(#c8e4f8, #5890b8);
}

.attr-row {
  display: flex;
  align-items: center;
  justify-content: space-between;
  height: 29px;
  padding-right: 8px;
}

.attr-row + .attr-box {
  margin-right: 3px;
}

.chip {
  width: 11px;
  height: 14px;
  background: #2a2a2a;
  border: 2px solid #000;
  border-left: 0;
}

.tri {
  border: 5px solid transparent;
  border-top-color: #000;
  border-bottom: 0;
}

.attr-row span {
  margin-left: 6px;
}

.attr-box {
  height: 47px;
}

.fill {
  background: #fff;
  border: 1px solid #000;
  border-left: 0;
}

.pen {
  background: #000;
}

.opacity {
  padding: 3px 0 5px 15px;
}

.shadow-row {
  display: flex;
  gap: 29px;
}

.drop-btn {
  width: 13px;
  height: 14px;
  border: 1px solid #333;
  border-right-width: 3px;
  background: var(--face);
}

/* document window */
.main {
  flex: 1;
  min-width: 0;
  display: flex;
  flex-direction: column;
  padding-left: 3px;
}

.tabstrip {
  position: relative;
  display: flex;
  align-items: center;
  height: 25px;
  padding-left: 32px;
  border-top: 1px solid var(--line);
  border-bottom: 1px solid #666;
  background: #f7f7f7;
  box-shadow: inset 0 -2px #f7f7f7, inset 0 -3px var(--line);
}

.tabstrip strong {
  position: relative;
  width: 67px;
  font: bold 12px/16px var(--title);
}

.tabstrip .pal-close {
  position: relative;
}

.tab-shape {
  position: absolute;
  left: 0;
  top: 0;
}

.toolbar {
  display: flex;
  align-items: center;
  border-left: 1px solid #666;
}

.view-bar {
  height: 26px;
  gap: 2px;
  padding-left: 5px;
  border-bottom: 1px solid #aaa;
}

.mode-bar {
  height: 31px;
  gap: 7px;
  padding-left: 8px;
}

.sep {
  width: 1px;
  height: 17px;
  flex-shrink: 0;
  background: var(--line);
}

.mode-bar .sep {
  height: 20px;
}

.s2 { margin-left: 2px; }
.s4 { margin-left: 4px; }
.s6 { margin-left: 6px; }
.s8 { margin-left: 8px; }

.combo {
  position: relative;
  flex-shrink: 0;
  height: 17px;
}

.combo select {
  width: 100%;
  height: 17px;
  padding-left: 3px;
  border: 1px solid var(--line);
  background: #fff;
}

.wide { width: 187px; }
.zoom { width: 81px; }

.combo::after {
  content: "";
  position: absolute;
  right: 5px;
  top: 7px;
  border: 4px solid transparent;
  border-top-color: #000;
  border-bottom: 0;
}

.combo::before {
  content: "";
  position: absolute;
  right: 1px;
  top: 1px;
  width: 17px;
  height: 15px;
  background: var(--face);
  border-left: 1px solid var(--line);
}

.combo.flat::before {
  border: 0;
}

.combo.flat::after {
  right: 8px;
  border-width: 3px 3px 0;
}

.field {
  height: 19px;
  padding-left: 2px;
  border: 1px solid var(--line);
  background: #fff;
}

.angle {
  width: 50px;
}

.drop-combo {
  display: flex;
  align-items: center;
  justify-content: space-between;
  flex-shrink: 0;
  width: 41px;
  height: 18px;
  padding-right: 5px;
  border: 1px solid var(--line);
}

.drop-combo::after {
  content: "";
  border: 4px solid transparent;
  border-top-color: #000;
  border-bottom: 0;
}

.drop-combo.flat::after {
  border-width: 3px 3px 0;
}

.drop-combo.split {
  background: linear-gradient(90deg, transparent 21px, var(--line) 21px 22px, transparent 22px);
}

.drop-combo.big {
  width: 44px;
  height: 24px;
  background: linear-gradient(90deg, transparent 24px, var(--line) 24px 25px, transparent 25px);
}

.pressed {
  width: 21px;
  height: 20px;
  flex-shrink: 0;
  background: #cce4f7;
  box-shadow: 0 0 0 1px var(--blue) inset;
}

.mode {
  display: flex;
  align-items: center;
  justify-content: center;
  flex-shrink: 0;
  width: 30px;
  height: 24px;
  border: 1px solid transparent;
}

.mode.on {
  border-color: var(--blue);
  background: #d3e7f7;
}

.mode-text {
  white-space: nowrap;
}

.mode-right {
  display: flex;
  align-items: center;
  gap: 5px;
  width: 276px;
  margin-left: auto;
  overflow: hidden;
}

.drawing {
  flex: 1;
  min-height: 0;
  display: grid;
  grid-template: 15px 1fr / 15px 1fr;
  border-left: 1px solid #666;
}

.ruler {
  width: 100%;
  height: 100%;
  background: #fdfdf8;
  overflow: hidden;
}

#ruler-x {
  border-bottom: 1px solid #000;
}

#ruler-y {
  border-right: 1px solid #000;
}

.ruler text {
  font: 10px var(--ui);
}

.canvas {
  width: 100%;
  height: 100%;
  background: #f9f9f0;
}

.canvas text {
  font: 31px "Liberation Sans", Arial, sans-serif;
}

/* floating palettes */
.snapping {
  position: absolute;
  left: 191px;
  bottom: 0;
  width: 141px;
  height: 30px;
  border: 2px solid #888;
  border-bottom: 0;
  background: var(--face);
}

.snapping header {
  display: flex;
  align-items: center;
  justify-content: space-between;
  height: 24px;
  padding: 0 3px 0 2px;
  background: #888;
  border: 1px solid #ddd;
  color: #fff;
  font: bold 12px/16px var(--title);
}

.snap-row {
  display: flex;
  margin-left: 36px;
}

.snap-row i {
  width: 33px;
  height: 4px;
  border: 1px solid var(--blue);
  border-bottom: 0;
  background: #d3e7f7;
}

.navigation {
  position: absolute;
  right: 0;
  top: 612px;
  bottom: 0;
  width: 148px;
  display: flex;
  flex-direction: column;
  padding-left: 3px;
  border-left: 1px solid #ddd;
  background: var(--face);
  overflow: hidden;
}

.nav-tabs {
  display: flex;
  flex-shrink: 0;
  height: 25px;
  background: #f7f7f7;
}

.nav-tabs span {
  display: flex;
  justify-content: center;
  flex-shrink: 0;
  width: 29px;
  padding-top: 4px;
}

.nav-tabs .on {
  background: var(--face);
  border-right: 1px solid #000;
}

.nav-body {
  flex: 1;
  display: flex;
  flex-direction: column;
  padding: 11px 0 0 2px;
  border-left: 1px solid var(--line);
}

.nav-row {
  display: flex;
  align-items: center;
  height: 23px;
  margin-bottom: 10px;
  padding-left: 5px;
}

.nav-row label {
  width: 73px;
}

.plain {
  flex: 1;
  min-width: 0;
  height: 18px;
  padding-left: 3px;
  border: 1px solid #888;
  border-right: 0;
  background: #fff;
}

.nav-row .plain {
  height: 23px;
}

.search {
  flex-shrink: 0;
  height: 22px;
  padding-left: 3px;
  border: 1px solid var(--dark);
  border-right: 0;
  border-bottom: 0;
  background: #fff;
}

.layers {
  flex: 1;
  margin-top: 11px;
  table-layout: fixed;
  width: 180px;
  border-collapse: collapse;
  border: 1px solid var(--dark);
  background: #fff;
}

.layers th {
  height: 21px;
  padding: 0 0 0 7px;
  background: var(--face);
  border-right: 1px solid var(--dark);
  border-bottom: 1px solid var(--dark);
  font-weight: normal;
  text-align: left;
  white-space: nowrap;
}

.layers th:last-child {
  padding-left: 5px;
}

.layers th:first-child { width: 64px; }
.layers th:nth-child(2) { width: 24px; }

.layers td {
  padding: 0 0 0 5px;
  border-right: 1px solid var(--dark);
  white-space: nowrap;
}

.layers td:nth-child(4) {
  border-right: 0;
  padding-left: 9px;
}

.layers .layer {
  height: 18px;
}

.objinfo {
  position: absolute;
  right: 0;
  top: 211px;
  width: 168px;
  height: 414px;
  padding: 3px 0 2px 2px;
  border: 1px solid #ddd;
  border-right: 0;
  border-bottom: 2px solid #888;
  background: var(--face);
  overflow: hidden;
}

.objinfo header {
  height: 22px;
  padding-left: 2px;
  background: #bfcddb;
  font: bold 13px/22px var(--title);
}

.oi-tabs {
  display: flex;
  height: 24px;
  padding: 3px 0 0 3px;
  background: #f7f7f7;
}

.oi-tabs button {
  height: 16px;
  margin-top: 2px;
  padding: 0 5px 0 6px;
  border-right: 1px solid #888;
  font: 12px/14px var(--title);
}

.oi-tabs .on {
  height: 21px;
  margin: 0;
  padding: 0 6px 2px 5px;
  border-right-color: #000;
  background: var(--face);
}

.oi-body {
  padding: 6px 0 0 2px;
  border-left: 1px solid var(--line);
}

.oi-type {
  height: 20px;
  margin-bottom: 3px;
  padding-left: 4px;
  border: 1px solid var(--dark);
  border-right: 0;
  font: bold 12px/18px var(--title);
}

.oi-form {
  padding-left: 4px;
  border: 1px solid var(--dark);
  border-right: 0;
  border-bottom-color: #fff;
}

.oi-row {
  display: flex;
  align-items: center;
  height: 19px;
}

.oi-row label {
  width: 35px;
}

.oi-row.mid label {
  width: 73px;
}

.oi-row.in {
  padding-left: 17px;
}

.oi-row.mid.in label {
  width: 56px;
}

.oi-row.group {
  gap: 9px;
}

.oi-row.check {
  gap: 6px;
  margin-left: -2px;
}

.oi-row.check label {
  width: auto;
}

.oi-row.group::after {
  content: "";
  flex: 1;
  margin-left: -5px;
  border-top: 1px solid var(--line);
}

.oi-row b, .layers b {
  font: bold 12px/14px Roboto, var(--ui);
}

.minus {
  width: 9px;
  height: 9px;
  border: 1px solid #888;
  background: linear-gradient(transparent 3px, #333 3px 4px, transparent 4px);
}

.oi-length {
  display: flex;
  align-items: center;
  height: 57px;
  margin-left: -4px;
  padding-left: 4px;
  border-top: 1px solid var(--line);
  border-bottom: 1px solid var(--line);
}

.oi-length label {
  width: 53px;
  margin: 0 1px 0 4px;
  padding-left: 4px;
  background: #e4e4e4;
  line-height: 18px;
}

.oi-name {
  display: flex;
  align-items: center;
  height: 20px;
  margin-top: 4px;
  padding-left: 4px;
}

.oi-name label {
  width: 35px;
}

/* dialogs */
.dialog {
  position: absolute;
  display: flex;
  flex-direction: column;
  border: 1px solid #aaa;
  background: var(--face);
  box-shadow: 0 3px 12px rgba(0, 0, 0, 0.3);
}

.dialog header {
  display: flex;
  justify-content: space-between;
  height: 31px;
  flex-shrink: 0;
  padding: 0 17px 0 8px;
  background: #fff;
  color: #999;
  font: 11px/28px var(--title);
}

.win-btns {
  display: flex;
  gap: 35px;
}

.win-btns button {
  font: 13px/27px var(--title);
}

.hint {
  padding: 6px 4px;
  border: 1px solid var(--line);
  box-shadow: 1px 1px #fff, inset 1px 1px #fff;
  line-height: 13px;
}

.btn {
  width: 73px;
  height: 21px;
  border: 1px solid #adadad;
  background: #e1e1e1;
}

.btn.default {
  border: 2px solid var(--blue);
}

input[type="checkbox"] {
  position: relative;
  flex-shrink: 0;
  width: 13px;
  height: 13px;
  border: 1px solid #333;
  background: #fff;
}

input[type="checkbox"]:checked::before {
  content: "";
  position: absolute;
  left: 3px;
  top: 0;
  width: 5px;
  height: 8px;
  border: solid #333;
  border-width: 0 1px 1px 0;
  transform: rotate(42deg);
}

input[type="radio"] {
  width: 13px;
  height: 13px;
  border: 1px solid #333;
  border-radius: 50%;
  background: #fff;
}

.prefs {
  left: 662px;
  top: 239px;
  width: 536px;
  height: 573px;
}

.prefs-body {
  padding: 10px 12px 0;
}

.tabs {
  display: flex;
  align-items: flex-end;
  height: 20px;
  gap: 2px;
  padding-left: 2px;
}

.tabs button {
  height: 17px;
  padding: 0 3px 1px;
  border: 1px solid #fff;
  border-right: 2px solid var(--dark);
  border-bottom: 0;
}

.tabs button:first-child {
  margin-right: -2px;
  padding: 0 5px 1px;
  border-right: 0;
}

.tabs .on {
  position: relative;
  height: 21px;
  padding: 0 6px 4px;
  margin-bottom: -1px;
  background: var(--face);
}

.tab-page {
  height: 392px;
  padding: 9px 5px;
  border: 1px solid #fff;
  border-bottom: 2px solid var(--dark);
}

.check-row {
  display: flex;
  align-items: center;
  gap: 3px;
  height: 13px;
  margin-bottom: 6px;
}

.check-row.indent {
  margin-left: 18px;
}

.prefs fieldset {
  display: flex;
  justify-content: space-between;
  height: 80px;
  margin: 14px 0 0;
  padding: 0 80px 0 11px;
  border: 1px solid var(--line);
}

.prefs legend {
  margin-left: -4px;
  padding: 0 2px;
}

.box {
  width: 220px;
  height: 20px;
  margin-top: 6px;
  padding-left: 4px;
  border: 1px solid #888;
  background: #fff;
}

.units {
  display: flex;
  flex-direction: column;
  gap: 2px;
  margin-top: 5px;
}

.units label {
  display: flex;
  gap: 4px;
}

.prefs .hint {
  height: 53px;
  margin-top: 16px;
}

.prefs-foot {
  display: flex;
  justify-content: flex-end;
  margin-top: 13px;
  padding-right: 91px;
}

.custom {
  left: 796px;
  top: 355px;
  width: 268px;
  height: 342px;
}

.custom-body {
  padding: 11px 13px 0 12px;
}

.custom-top {
  display: flex;
  justify-content: space-between;
}

.standards {
  width: 150px;
  margin-top: -1px;
}

.list {
  height: 169px;
  margin-top: 4px;
  padding: 1px;
  border: 1px solid var(--dark);
  background: #fff;
}

.item {
  height: 16px;
  padding-left: 3px;
  background: var(--blue);
  color: #fff;
  line-height: 15px;
}

.std-btns {
  display: flex;
  flex-direction: column;
  justify-content: space-between;
  width: 75px;
  height: 187px;
}

.std-btns .btn {
  width: 75px;
}

.custom .hint {
  height: 40px;
  margin-top: 22px;
}

.custom-foot {
  margin-top: 13px;
  text-align: right;
}

.edit {
  left: 1094px;
  top: 249px;
  width: 454px;
  height: 568px;
  border-color: #666;
}

.edit header {
  color: #000;
}

.edit-body {
  padding: 0 13px 0 12px;
}

.edit-name {
  height: 33px;
  padding-top: 9px;
  border-bottom: 1px solid var(--line);
}

.diagram {
  display: flex;
  height: 146px;
  padding-top: 4px;
}

.diagram > svg {
  overflow: visible;
}

.col {
  display: flex;
  flex-direction: column;
  gap: 3px;
}

.c1 {
  padding-top: 15px;
}

.c2 {
  padding-top: 14px;
  gap: 72px;
}

.c3 {
  width: 54px;
  padding-top: 30px;
}

.c3 .num:first-child {
  margin: 0 0 26px 6px;
}

.num {
  width: 48px;
  height: 20px;
  flex-shrink: 0;
  padding-left: 2px;
  border: 1px solid #777;
  background: #fff;
}

.num:disabled {
  border-color: #ccc;
  color: #777;
}

.num.sel {
  border-color: var(--blue);
  outline: 0;
}

.num.sel::selection {
  background: var(--blue);
  color: #fff;
}

.note {
  height: 27px;
  border-bottom: 1px solid var(--line);
}

.options {
  display: grid;
  grid-template-columns: 212px 1fr;
  grid-template-rows: 36px 29px 26px 29px 30px 27px 20px;
  align-items: start;
  margin-top: 9px;
}

.opt {
  display: flex;
  align-items: center;
  height: 20px;
  gap: 3px;
}

.lab {
  width: 76px;
  white-space: nowrap;
}

.mlab {
  width: 101px;
}

.lab.off {
  color: #999;
}

.pct {
  margin-left: 6px;
  color: #555;
}

.drop {
  position: relative;
  width: 120px;
  height: 20px;
}

.drop.small {
  width: 42px;
}

.drop select {
  width: 100%;
  height: 20px;
  padding-left: 4px;
  border: 1px solid #777;
  background: #fff;
}

.drop::after {
  content: "";
  position: absolute;
  right: 7px;
  top: 5px;
  width: 6px;
  height: 6px;
  border: solid #444;
  border-width: 0 1px 1px 0;
  transform: rotate(45deg);
}

.drop svg {
  position: absolute;
  left: 3px;
  top: 3px;
}

.drop.off select {
  border-color: #ccc;
  background: linear-gradient(90deg, var(--face) 100px, #fff 100px);
  color: #888;
}

.drop.off::after {
  border-color: #bbb;
}

.edit .hint {
  height: 40px;
  margin-top: 33px;
}

.edit-foot {
  display: flex;
  justify-content: flex-end;
  gap: 17px;
  margin-top: 14px;
}
```

FILE: rulers.js
```js
const NS = 'http://www.w3.org/2000/svg';
const MAJOR = 103.43; // pixels per 500 units

function add(svg, tag, attrs, text) {
  const el = document.createElementNS(NS, tag);
  for (const k in attrs) el.setAttribute(k, attrs[k]);
  if (text !== undefined) el.textContent = text;
  svg.append(el);
}

function tick(pos, horizontal, len) {
  const p = Math.floor(pos) + 0.5;
  return horizontal ? `M${p} 14v-${len}` : `M14 ${p}h-${len}`;
}

function ruler(id, start, first, horizontal) {
  const svg = document.getElementById(id);
  const size = horizontal ? svg.clientWidth : svg.clientHeight;
  let d = '';
  for (let i = -1; start + i * MAJOR < size + MAJOR; i++) {
    const pos = start + i * MAJOR;
    d += tick(pos, horizontal, 14);
    for (let m = 1; m < 10; m++) d += tick(pos + m * MAJOR / 10, horizontal, 2);
    if (i < 0 || pos > size + 20) continue;
    const label = Math.abs(first - i * 500);
    const x = Math.floor(pos);
    if (horizontal) add(svg, 'text', { x: x + 3, y: 8 }, label);
    else add(svg, 'text', { transform: `translate(9 ${x - 3}) rotate(-90)` }, label);
  }
  add(svg, 'path', { d, stroke: '#000' });
  // cursor position
  const c = horizontal ? 'M14.5 0v14' : 'M0 107.5h14';
  add(svg, 'path', { d: c, stroke: '#ff0', 'stroke-width': 4, 'stroke-opacity': 0.8 });
  add(svg, 'path', { d: c, stroke: '#000' });
}

ruler('ruler-x', 7.5, 8000, true);
ruler('ruler-y', 5.3, 3000, false);

document.getElementById('first').select();
```
